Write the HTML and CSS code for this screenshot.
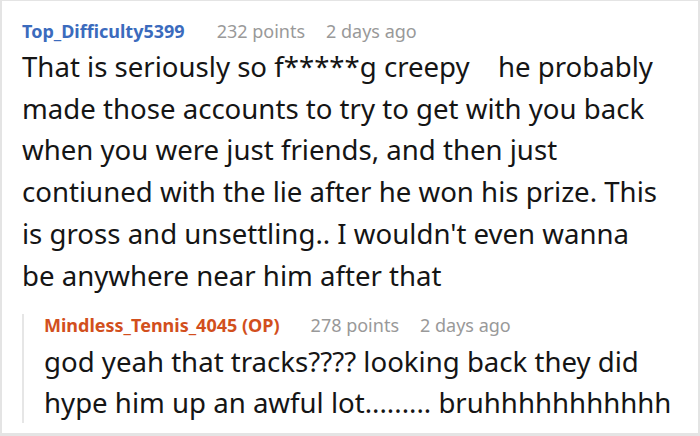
FILE: index.html
```html
<!DOCTYPE html>
<html>
<head>
<meta charset="utf-8">
<link rel="stylesheet" href="styles.css">
</head>
<body>
<div class="frame">
  <div class="comment">
    <div class="meta">
      <span class="user">Top_Difficulty5399</span>
      <span class="info">232 points</span>
      <span class="info">2 days ago</span>
    </div>
    <p class="body">That is seriously so f*****g creepy <span class="gap"></span> he probably<br>made those accounts to try to get with you back<br>when you were just friends, and then just<br>contiuned with the lie after he won his prize. This<br>is gross and unsettling.. I wouldn't even wanna<br>be anywhere near him after that</p>
    <div class="reply">
      <div class="meta">
        <span class="user op">Mindless_Tennis_4045 (OP)</span>
        <span class="info">278 points</span>
        <span class="info">2 days ago</span>
      </div>
      <p class="body">god yeah that tracks???? looking back they did<br>hype him up an awful lot......... bruhhhhhhhhhhh</p>
    </div>
  </div>
</div>
</body>
</html>
```
FILE: styles.css
```css
html, body {
  margin: 0;
  padding: 0;
  background: #fff;
}
.frame {
  width: 700px;
  height: 436px;
  box-sizing: border-box;
  border: 2px solid #e4e4e4;
  border-top-width: 1px;
  border-bottom-width: 3px;
  overflow: hidden;
  font-family: "Noto Sans", sans-serif;
}
.comment {
  padding: 19px 20px 0 20px;
}
.meta {
  display: flex;
  align-items: baseline;
  gap: 21px;
  font-size: 18px;
  line-height: 22px;
  white-space: nowrap;
}
.user {
  font-weight: bold;
  color: #3b6bbd;
  margin-right: 11px;
}
.user.op {
  color: #d24f1d;
  margin-right: 10px;
}
.info {
  color: #999;
}
.body {
  margin: 4px 0 0 0;
  font-size: 27.6px;
  line-height: 41.7px;
  color: #151515;
  white-space: nowrap;
}
.gap {
  display: inline-block;
  width: 14px;
}
.reply {
  margin-top: 28px;
  border-left: 2px solid #e6e6e6;
  padding-left: 20px;
}
.reply .meta {
  margin-top: -10px;
}
.reply .body {
  margin-top: 5px;
  margin-bottom: -8px;
  line-height: 41px;
}
```
